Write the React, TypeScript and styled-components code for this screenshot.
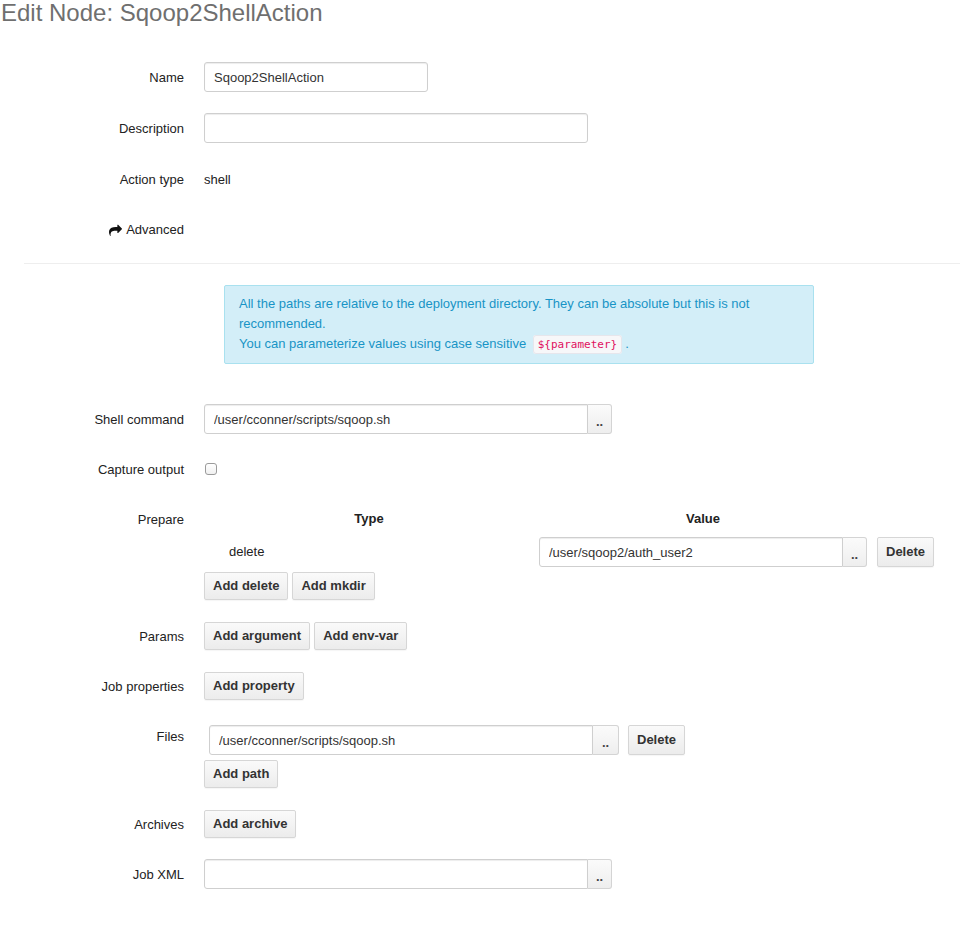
import React from "react";
import styled, { createGlobalStyle } from "styled-components";

const Global = createGlobalStyle`
  html, body { margin: 0; padding: 0; background: #fff; }
  body {
    font-family: "Liberation Sans", Arial, Helvetica, sans-serif;
    font-size: 13px;
    line-height: 20px;
    color: #333;
  }
  * { box-sizing: border-box; }
`;

const Page = styled.div`
  width: 960px;
  min-height: 926px;
  overflow: hidden;
`;

const Title = styled.h1`
  margin: 0;
  font-size: 24px;
  line-height: 26px;
  font-weight: normal;
  color: #6f6f6f;
  padding-left: 1px;
`;

const Form = styled.form`
  margin: 36px 0 0 0;
  padding-left: 24px;
`;

const Group = styled.div<{ $mb?: number }>`
  display: grid;
  grid-template-columns: 160px 1fr;
  column-gap: 20px;
  margin-bottom: ${(p) => (p.$mb ?? 20)}px;
`;

const Label = styled.label`
  text-align: right;
  padding-top: 6px;
  line-height: 20px;
  color: #222;
  display: flex;
  justify-content: flex-end;
  align-items: flex-start;
  gap: 4px;
`;

const Controls = styled.div`
  min-height: 30px;
`;

const StaticText = styled.div`
  padding-top: 6px;
  line-height: 20px;
  color: #222;
`;

const Input = styled.input<{ $w: number; $append?: boolean }>`
  width: ${(p) => p.$w}px;
  height: 30px;
  padding: 4px 9px;
  font-family: "Liberation Sans", Arial, Helvetica, sans-serif;
  font-size: 13px;
  color: #333;
  background: #fff;
  border: 1px solid #cfcfcf;
  border-radius: ${(p) => (p.$append ? "3px 0 0 3px" : "3px")};
  box-shadow: inset 0 1px 1px rgba(0, 0, 0, 0.075);
  outline: none;
  vertical-align: top;
  margin: 0;
`;

const Append = styled.div`
  display: inline-flex;
  vertical-align: top;
`;

const AddOn = styled.button<{ $w?: number }>`
  width: ${(p) => p.$w ?? 24}px;
  height: 30px;
  margin: 0;
  padding: 0;
  border: 1px solid #d4d4d4;
  border-left: none;
  border-radius: 0 3px 3px 0;
  background: linear-gradient(#fbfbfb, #eeeeee);
  font-family: "Liberation Sans", Arial, sans-serif;
  font-weight: bold;
  font-size: 13px;
  color: #444;
  padding-top: 4px;
`;

const Btn = styled.button<{ $h?: number }>`
  height: ${(p) => p.$h ?? 28}px;
  padding: 0 8px;
  margin: 0 4px 0 0;
  border: 1px solid #d6d6d6;
  border-radius: 2px;
  background: linear-gradient(#fafafa, #ececec);
  font-family: "Liberation Sans", Arial, sans-serif;
  font-weight: bold;
  font-size: 13px;
  line-height: 18px;
  color: #333;
  vertical-align: top;
  box-shadow: 0 1px 1px rgba(0, 0, 0, 0.04);
`;

const BtnRow = styled.div`
  display: flex;
  padding: 1px 0;
`;

const Divider = styled.hr`
  margin: 0 0 21px 0;
  border: none;
  border-top: 1px solid #eee;
  height: 0;
`;

const Alert = styled.div`
  margin-left: 20px;
  width: 590px;
  padding: 8px 35px 8px 14px;
  background: #d3eef8;
  border: 1px solid #a9e1ef;
  border-radius: 2px;
  color: #1894c6;
  line-height: 20px;
`;

const Code = styled.code`
  font-family: "DejaVu Sans Mono", "Liberation Mono", monospace;
  font-size: 11px;
  color: #e0115f;
  background: #f7f7f9;
  border: 1px solid #e6e6ec;
  border-radius: 3px;
  padding: 2px 4px;
  margin: 0 3px;
`;

const Check = styled.input`
  appearance: none;
  width: 12px;
  height: 12px;
  margin: 9px 0 0 1px;
  border: 1px solid #9b9b9b;
  border-radius: 3px;
  background: linear-gradient(#fff, #f0f0f0);
  display: block;
`;

const Table = styled.table`
  border-collapse: collapse;
  table-layout: fixed;
`;

const Th = styled.th<{ $w: number }>`
  width: ${(p) => p.$w}px;
  padding: 5px 5px 4px;
  line-height: 20px;
  font-weight: bold;
  text-align: center;
  color: #222;
`;

const Td = styled.td<{ $pl?: number; $pr?: number }>`
  padding: 4px ${(p) => p.$pr ?? 5}px 4px ${(p) => p.$pl ?? 5}px;
  vertical-align: middle;
  color: #222;
`;

const Icon = styled.svg`
  width: 13px;
  height: 12px;
  margin-top: 4px;
  fill: #111;
`;

const ShareIcon = () => (
  <Icon viewBox="0 0 1792 1600">
    <path d="M1792 640q0 26-19 45l-512 512q-19 19-45 19t-45-19-19-45v-256h-224q-98 0-175.5 6t-154 21.5-133 42.5-105.5 69.5-80 101-48.5 138.5-17.5 181q0 55 5 123 0 6 2.5 23.5t2.5 26.5q0 15-8.5 25t-23.5 10q-16 0-28-17-7-9-13-22t-13.5-30-10.5-24q-127-285-127-451 0-199 53-333 162-403 875-403h224v-256q0-26 19-45t45-19 45 19l512 512q19 19 19 45z" />
  </Icon>
);

export default function App() {
  return (
    <Page>
      <Global />
      <Title>Edit Node: Sqoop2ShellAction</Title>
      <Form onSubmit={(e) => e.preventDefault()}>
        <Group $mb={21}>
          <Label>Name</Label>
          <Controls>
            <Input $w={224} defaultValue="Sqoop2ShellAction" />
          </Controls>
        </Group>
        <Group $mb={21}>
          <Label>Description</Label>
          <Controls>
            <Input $w={384} defaultValue="" />
          </Controls>
        </Group>
        <Group>
          <Label>Action type</Label>
          <Controls>
            <StaticText>shell</StaticText>
          </Controls>
        </Group>
        <Group $mb={19}>
          <Label>
            <ShareIcon />
            Advanced
          </Label>
          <Controls />
        </Group>
        <Divider />
        <Group $mb={40}>
          <div />
          <Alert>
            All the paths are relative to the deployment directory. They can be absolute but this is not
            recommended.
            <br />
            You can parameterize values using case sensitive <Code>{"${parameter}"}</Code>.
          </Alert>
        </Group>
        <Group>
          <Label>Shell command</Label>
          <Controls>
            <Append>
              <Input $w={384} $append defaultValue="/user/cconner/scripts/sqoop.sh" />
              <AddOn>..</AddOn>
            </Append>
          </Controls>
        </Group>
        <Group>
          <Label>Capture output</Label>
          <Controls>
            <Check type="checkbox" />
          </Controls>
        </Group>
        <Group>
          <Label>Prepare</Label>
          <Controls>
            <Table>
              <thead>
                <tr>
                  <Th $w={330}>Type</Th>
                  <Th $w={338}>Value</Th>
                  <Th $w={67} />
                </tr>
              </thead>
              <tbody>
                <tr>
                  <Td $pl={25}>delete</Td>
                  <Td>
                    <Append>
                      <Input $w={304} $append defaultValue="/user/sqoop2/auth_user2" />
                      <AddOn>..</AddOn>
                    </Append>
                  </Td>
                  <Td>
                    <Btn $h={30}>Delete</Btn>
                  </Td>
                </tr>
              </tbody>
            </Table>
            <BtnRow>
              <Btn>Add delete</Btn>
              <Btn>Add mkdir</Btn>
            </BtnRow>
          </Controls>
        </Group>
        <Group>
          <Label>Params</Label>
          <Controls>
            <BtnRow>
              <Btn>Add argument</Btn>
              <Btn>Add env-var</Btn>
            </BtnRow>
          </Controls>
        </Group>
        <Group>
          <Label>Job properties</Label>
          <Controls>
            <BtnRow>
              <Btn>Add property</Btn>
            </BtnRow>
          </Controls>
        </Group>
        <Group>
          <Label>Files</Label>
          <Controls>
            <Table>
              <tbody>
                <tr>
                  <Td>
                    <Append>
                      <Input $w={384} $append defaultValue="/user/cconner/scripts/sqoop.sh" />
                      <AddOn $w={26}>..</AddOn>
                    </Append>
                  </Td>
                  <Td $pl={4}>
                    <Btn $h={30}>Delete</Btn>
                  </Td>
                </tr>
              </tbody>
            </Table>
            <BtnRow>
              <Btn>Add path</Btn>
            </BtnRow>
          </Controls>
        </Group>
        <Group>
          <Label>Archives</Label>
          <Controls>
            <BtnRow>
              <Btn>Add archive</Btn>
            </BtnRow>
          </Controls>
        </Group>
        <Group>
          <Label>Job XML</Label>
          <Controls>
            <Append>
              <Input $w={384} $append defaultValue="" />
              <AddOn>..</AddOn>
            </Append>
          </Controls>
        </Group>
      </Form>
    </Page>
  );
}
